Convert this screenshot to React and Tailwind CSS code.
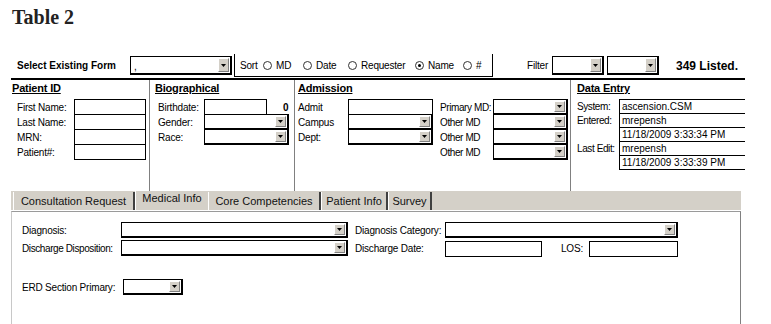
const Arrow = () => (
  <span className="flex h-full w-[11px] shrink-0 items-center justify-center border border-t-white border-l-white border-r-[#808080] border-b-[#808080] bg-[#d4d0c8]">
    <svg width="5" height="3" viewBox="0 0 5 3">
      <path d="M0 0h5L2.5 3z" fill="#000" />
    </svg>
  </span>
);

function Sel({ className = '', children }) {
  return (
    <div className={`flex items-stretch justify-between bg-white border-t border-l border-r-2 border-b-2 border-black p-px ${className}`}>
      <span className="flex-1 pl-[2px] text-[10px] leading-[12px]">{children}</span>
      <Arrow />
    </div>
  );
}

function Inp({ className = '', children }) {
  return (
    <div className={`bg-white border border-black px-[2px] text-[10px] leading-[13px] ${className}`}>
      {children}
    </div>
  );
}

function Radio({ checked, label, className = '' }) {
  return (
    <div className={`flex items-center ${className}`}>
      <span className="flex h-[9px] w-[9px] items-center justify-center rounded-full border border-[#333] bg-white">
        {checked && <span className="h-[3px] w-[3px] rounded-full bg-black" />}
      </span>
      <span className="ml-[4px]">{label}</span>
    </div>
  );
}

function Header({ children, className = '' }) {
  return (
    <div className={`h-[19px] text-[11px] font-bold underline leading-[17px] ${className}`}>{children}</div>
  );
}

const tabs = [
  { name: 'Consultation Request', w: 'w-[122px]' },
  { name: 'Medical Info', w: 'w-[73px]', active: true },
  { name: 'Core Competencies', w: 'w-[113px]' },
  { name: 'Patient Info', w: 'w-[67px]' },
  { name: 'Survey', w: 'w-[44px]' },
];

export default function App() {
  return (
    <div className="w-[771px] h-[324px] overflow-hidden whitespace-nowrap bg-white text-black font-['Liberation_Sans',Arial,sans-serif] text-[10px] tracking-[-0.2px]">
      {/* Title */}
      <div className="h-[53px] pt-[7px] pl-[12px]">
        <h1 className="font-['Liberation_Serif','Times_New_Roman',serif] text-[20px] font-bold leading-[20px] tracking-normal text-[#222]">Table 2</h1>
      </div>

      {/* Toolbar */}
      <div className="flex h-[25px] items-center">
        <div className="ml-[17px] w-[113px] font-bold text-[10px] tracking-normal">Select Existing Form</div>
        <Sel className="w-[102px] h-[19px]">
          <span className="block pt-[3px]">,</span>
        </Sel>
        <div className="ml-[2px] flex h-[23px] w-[259px] items-center border-l border-r border-b border-black pl-[5px]">
          <span className="w-[23px]">Sort</span>
          <Radio label="MD" className="w-[40px]" />
          <Radio label="Date" className="w-[45px]" />
          <Radio label="Requester" className="w-[67px]" />
          <Radio label="Name" checked className="w-[48px]" />
          <Radio label="#" />
        </div>
        <span className="ml-[34px] w-[25px]">Filter</span>
        <Sel className="w-[52px] h-[19px]" />
        <Sel className="ml-[3px] w-[52px] h-[19px]" />
        <span className="ml-[17px] text-[12px] font-bold tracking-normal">349 Listed.</span>
      </div>

      <div className="ml-[11px] h-[2px] w-[734px] bg-black" />

      {/* Sections */}
      <div className="ml-[11px] flex h-[111px] w-[734px]">
        {/* Patient ID */}
        <div className="w-[139px] shrink-0 border-r border-[#808080] pl-[1px]">
          <Header>Patient ID</Header>
          <div className="pl-[5px]">
            {['First Name:', 'Last Name:', 'MRN:', 'Patient#:'].map((l, i) => (
              <div key={l} className={`flex items-center ${i ? '-mt-px' : ''}`}>
                <span className="w-[57px]">{l}</span>
                <Inp className="w-[72px] h-[16px]" />
              </div>
            ))}
          </div>
        </div>

        {/* Biographical */}
        <div className="w-[145px] shrink-0 border-r border-[#808080] pl-[5px]">
          <Header>Biographical</Header>
          <div className="pl-[3px]">
            <div className="flex items-center">
              <span className="w-[46px]">Birthdate:</span>
              <Inp className="w-[63px] h-[16px]" />
              <span className="ml-[16px] font-bold">0</span>
            </div>
            <div className="-mt-px flex items-center">
              <span className="w-[46px]">Gender:</span>
              <Sel className="w-[85px] h-[16px]" />
            </div>
            <div className="-mt-px flex items-center">
              <span className="w-[46px]">Race:</span>
              <Sel className="w-[85px] h-[16px]" />
            </div>
          </div>
        </div>

        {/* Admission */}
        <div className="w-[276px] shrink-0 border-r border-[#808080] pl-[3px]">
          <Header>Admission</Header>
          <div className="flex items-start">
            <div>
              <div className="flex items-center">
                <span className="w-[50px]">Admit</span>
                <Inp className="w-[85px] h-[16px]" />
              </div>
              <div className="-mt-px flex items-center">
                <span className="w-[50px]">Campus</span>
                <Sel className="w-[85px] h-[16px]" />
              </div>
              <div className="-mt-px flex items-center">
                <span className="w-[50px]">Dept:</span>
                <Sel className="w-[85px] h-[16px]" />
              </div>
            </div>
            <div className="ml-[7px]">
              {['Primary MD:', 'Other MD', 'Other MD', 'Other MD'].map((l, i) => (
                <div key={i} className={`flex items-center ${i ? '-mt-px' : ''}`}>
                  <span className="w-[53px] tracking-[-0.4px]">{l}</span>
                  <Sel className="w-[75px] h-[16px]" />
                </div>
              ))}
            </div>
          </div>
        </div>

        {/* Data Entry */}
        <div className="flex-1 pl-[6px]">
          <Header className="h-[17px]">Data Entry</Header>
          {[
            ['System:', 'ascension.CSM'],
            ['Entered:', 'mrepensh'],
            ['', '11/18/2009 3:33:34 PM'],
            ['Last Edit:', 'mrepensh'],
            ['', '11/18/2009 3:33:39 PM'],
          ].map(([l, v], i) => (
            <div key={i} className={`flex items-center ${i ? '-mt-px' : ''}`}>
              <span className="w-[42px] tracking-[-0.4px]">{l}</span>
              <div className="h-[15px] flex-1 border-t border-l border-b border-black pl-[2px] text-[10px] leading-[13px] tracking-normal">{v}</div>
            </div>
          ))}
        </div>
      </div>

      {/* Tabs */}
      <div className="ml-[11px] flex h-[20px] w-[730px] items-end border-b border-white bg-[#d4d0c8] pl-[2px]">
        {tabs.map((t) => (
          <div
            key={t.name}
            className={`flex items-center justify-center border-l border-l-white text-[11px] tracking-normal text-[#111] ${t.w} ${
              t.active ? 'h-[20px] pb-[3px]' : 'h-[18px] border-r-2 border-r-[#404040]'
            }`}
          >
            {t.name}
          </div>
        ))}
      </div>

      {/* Panel */}
      <div className="ml-[11px] h-[113px] w-[730px] border-t border-t-[#9a9a9a] border-l border-l-[#c8c8c8] border-r border-r-[#808080] bg-white pl-[10px] pt-[10px]">
        <div className="flex items-center">
          <span className="w-[99px]">Diagnosis:</span>
          <Sel className="w-[227px] h-[16px]" />
          <span className="ml-[7px] w-[90px]">Diagnosis Category:</span>
          <Sel className="w-[233px] h-[16px]" />
        </div>
        <div className="mt-[1px] flex items-center">
          <span className="w-[99px] tracking-[-0.4px]">Discharge Disposition:</span>
          <Sel className="w-[227px] h-[16px]" />
          <span className="ml-[7px] w-[90px]">Discharge Date:</span>
          <Inp className="mt-[2px] w-[97px] h-[16px]" />
          <span className="ml-[19px] w-[28px]">LOS:</span>
          <Inp className="mt-[2px] w-[89px] h-[16px]" />
        </div>
        <div className="mt-[22px] flex items-center">
          <span className="w-[101px]">ERD Section Primary:</span>
          <Sel className="w-[60px] h-[16px]" />
        </div>
      </div>
    </div>
  );
}
